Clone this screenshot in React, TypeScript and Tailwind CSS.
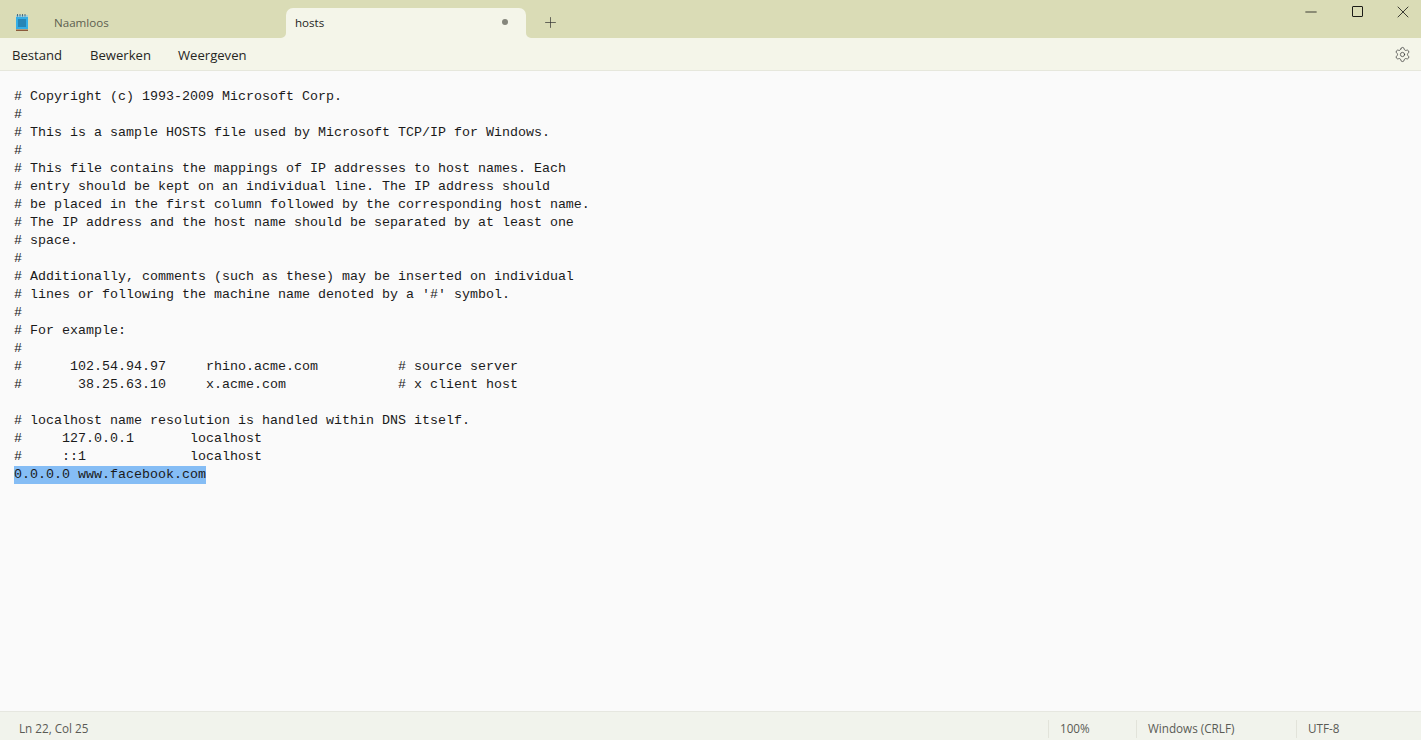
import { Minus, Plus, Settings, X } from "lucide-react";

const HOSTS_LINES = [
  "# Copyright (c) 1993-2009 Microsoft Corp.",
  "#",
  "# This is a sample HOSTS file used by Microsoft TCP/IP for Windows.",
  "#",
  "# This file contains the mappings of IP addresses to host names. Each",
  "# entry should be kept on an individual line. The IP address should",
  "# be placed in the first column followed by the corresponding host name.",
  "# The IP address and the host name should be separated by at least one",
  "# space.",
  "#",
  "# Additionally, comments (such as these) may be inserted on individual",
  "# lines or following the machine name denoted by a '#' symbol.",
  "#",
  "# For example:",
  "#",
  "#      102.54.94.97     rhino.acme.com          # source server",
  "#       38.25.63.10     x.acme.com              # x client host",
  "",
  "# localhost name resolution is handled within DNS itself.",
  "#     127.0.0.1       localhost",
  "#     ::1             localhost",
];

const uiFont = "font-['Open_Sans','Noto_Sans',sans-serif]";

function NotepadIcon() {
  return (
    <svg width="14" height="20" viewBox="0 0 14 20" className="shrink-0">
      <rect x="1" y="4" width="12" height="13" fill="#35aee6" />
      <rect x="1" y="3" width="12" height="2" fill="#9fd0de" />
      <path d="M2.5 2v2.5M5 2v2.5M7.5 2v2.5M10 2v2.5" stroke="#4a6a7c" strokeWidth="1" />
      <path d="M3 8h8M3 10h8M3 12h8M3 14h8" stroke="#1a5c86" strokeWidth="1" />
      <rect x="1" y="17.5" width="12" height="1.5" fill="#8a5a3c" />
    </svg>
  );
}

function TabFlare({ side }: { side: "left" | "right" }) {
  return (
    <svg
      width="5"
      height="5"
      viewBox="0 0 5 5"
      className={`absolute bottom-0 ${side === "left" ? "left-[-5px]" : "right-[-5px]"}`}
    >
      <path d={side === "left" ? "M5 0v5H0a5 5 0 0 0 5-5z" : "M0 0v5h5a5 5 0 0 1-5-5z"} fill="#f4f5e9" />
    </svg>
  );
}

function TitleBar() {
  return (
    <div className="flex h-[38px] shrink-0 items-end bg-[#dadcb6]">
      <div className="flex h-[30px] w-[286px] items-center">
        <div className="ml-[15px] mb-[2px]">
          <NotepadIcon />
        </div>
        <span className="ml-[25px] text-[11.6px] text-[#5d5f50]">Naamloos</span>
      </div>
      <div className="relative flex h-[30px] w-[240px] items-center justify-between rounded-t-[7px] bg-[#f4f5e9] pl-[9px] pr-[18px]">
        <TabFlare side="left" />
        <span className="text-[11.6px] text-[#26261f]">hosts</span>
        <span className="mb-[2px] h-[6px] w-[6px] rounded-full bg-[#85867c]" />
        <TabFlare side="right" />
      </div>
      <div className="flex h-[30px] w-[48px] items-center justify-center">
        <Plus size={17} strokeWidth={1} className="mb-[1px] text-[#333]" />
      </div>
      <div className="ml-auto flex h-[38px] items-start text-[#1c1c18]">
        <div className="flex h-[23px] w-[46px] items-center justify-center">
          <Minus size={18} strokeWidth={1.1} />
        </div>
        <div className="mr-[5px] flex h-[23px] w-[46px] items-center justify-center">
          <span className="h-[11px] w-[11px] rounded-[1px] border border-[#1c1c18]" />
        </div>
        <div className="flex h-[23px] w-[36px] items-center justify-center">
          <X size={20} strokeWidth={1} />
        </div>
      </div>
    </div>
  );
}

function MenuBar() {
  return (
    <div className="flex h-[33px] shrink-0 items-center border-b border-[#e6e7dc] bg-[#f4f5e9] pl-[12px] pr-[10px] pt-[3px] text-[13.1px] text-[#26261f]">
      <span className="w-[78px]">Bestand</span>
      <span className="w-[88px]">Bewerken</span>
      <span>Weergeven</span>
      <Settings size={17} strokeWidth={1} className="ml-auto mb-[3px] text-[#333]" />
    </div>
  );
}

function Editor() {
  return (
    <div className="min-h-0 flex-1 bg-[#fafafa] pl-[14px] pt-[17px] font-['Liberation_Mono',monospace] text-[13.33px] leading-[18px] text-[#1a1a1a]">
      {HOSTS_LINES.map((line, index) => (
        <div key={index} className="h-[18px] whitespace-pre">
          {line}
        </div>
      ))}
      <div className="h-[18px] w-[192px] whitespace-pre bg-[#85bdf5]">0.0.0.0 www.facebook.com</div>
    </div>
  );
}

function StatusBar() {
  return (
    <div className="flex h-[29px] shrink-0 items-center border-t border-[#e6e7e0] bg-[#f1f3ec] pl-[19px] pt-[6px] text-[11.7px] text-[#5a5b55]">
      <span>Ln 22, Col 25</span>
      <div className="ml-auto flex h-[18px] items-center">
        <span className="w-[88px] border-l border-[#e2e3da] pl-[11px]">100%</span>
        <span className="w-[160px] border-l border-[#e2e3da] pl-[11px]">Windows (CRLF)</span>
        <span className="w-[125px] border-l border-[#e2e3da] pl-[11px]">UTF-8</span>
      </div>
    </div>
  );
}

export default function App() {
  return (
    <div className={`flex h-[740px] w-[1421px] flex-col overflow-hidden ${uiFont}`}>
      <TitleBar />
      <MenuBar />
      <Editor />
      <StatusBar />
    </div>
  );
}
